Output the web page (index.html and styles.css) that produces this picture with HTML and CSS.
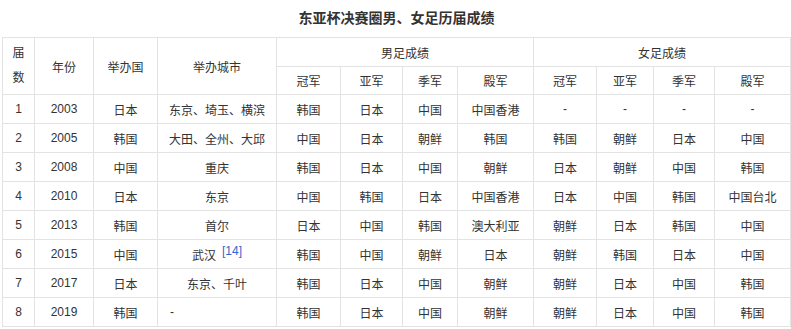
FILE: index.html
```html
<!DOCTYPE html>
<html lang="zh">
<head>
<meta charset="utf-8">
<link rel="stylesheet" href="styles.css">
</head>
<body>
<div class="wrap">
  <div class="title">东亚杯决赛圈男、女足历届成绩</div>
  <table class="results">
    <colgroup>
      <col class="c1"><col class="c2"><col class="c3"><col class="c4">
      <col class="c5"><col class="c6"><col class="c7"><col class="c8">
      <col class="c9"><col class="c10"><col class="c11"><col class="c12">
    </colgroup>
    <thead>
      <tr>
        <th rowspan="2" class="stack">届<br>数</th>
        <th rowspan="2">年份</th>
        <th rowspan="2">举办国</th>
        <th rowspan="2">举办城市</th>
        <th colspan="4">男足成绩</th>
        <th colspan="4">女足成绩</th>
      </tr>
      <tr>
        <th>冠军</th><th>亚军</th><th>季军</th><th>殿军</th>
        <th>冠军</th><th>亚军</th><th>季军</th><th>殿军</th>
      </tr>
    </thead>
    <tbody>
      <tr><td>1</td><td>2003</td><td>日本</td><td>东京、埼玉、横滨</td><td>韩国</td><td>日本</td><td>中国</td><td>中国香港</td><td>-</td><td>-</td><td>-</td><td>-</td></tr>
      <tr><td>2</td><td>2005</td><td>韩国</td><td>大田、全州、大邱</td><td>中国</td><td>日本</td><td>朝鲜</td><td>韩国</td><td>韩国</td><td>朝鲜</td><td>日本</td><td>中国</td></tr>
      <tr><td>3</td><td>2008</td><td>中国</td><td>重庆</td><td>韩国</td><td>日本</td><td>中国</td><td>朝鲜</td><td>日本</td><td>朝鲜</td><td>中国</td><td>韩国</td></tr>
      <tr><td>4</td><td>2010</td><td>日本</td><td>东京</td><td>中国</td><td>韩国</td><td>日本</td><td>中国香港</td><td>日本</td><td>中国</td><td>韩国</td><td>中国台北</td></tr>
      <tr><td>5</td><td>2013</td><td>韩国</td><td>首尔</td><td>日本</td><td>中国</td><td>韩国</td><td>澳大利亚</td><td>朝鲜</td><td>日本</td><td>韩国</td><td>中国</td></tr>
      <tr><td>6</td><td>2015</td><td>中国</td><td>武汉<sup class="ref">[14]</sup></td><td>韩国</td><td>中国</td><td>朝鲜</td><td>日本</td><td>朝鲜</td><td>韩国</td><td>日本</td><td>中国</td></tr>
      <tr><td>7</td><td>2017</td><td>日本</td><td>东京、千叶</td><td>韩国</td><td>日本</td><td>中国</td><td>朝鲜</td><td>朝鲜</td><td>日本</td><td>中国</td><td>韩国</td></tr>
      <tr><td>8</td><td>2019</td><td>韩国</td><td class="left">-</td><td>韩国</td><td>日本</td><td>中国</td><td>朝鲜</td><td>朝鲜</td><td>日本</td><td>中国</td><td>韩国</td></tr>
    </tbody>
  </table>
</div>
</body>
</html>
```

FILE: styles.css
```css
html, body {
  margin: 0;
  padding: 0;
  background: #fff;
}
body {
  font-family: "Liberation Sans", Arial, "Noto Sans CJK SC", sans-serif;
  color: #333;
  font-size: 12px;
}
.wrap {
  padding-left: 2px;
}
.title {
  width: 789px;
  height: 37px;
  line-height: 37px;
  text-align: center;
  font-size: 14px;
  font-weight: bold;
  color: #333;
}
.results {
  width: 789px;
  table-layout: fixed;
  border-collapse: collapse;
  border: 1px solid #e3e3e3;
}
.results th, .results td {
  border: 1px solid #e3e3e3;
  height: 28px;
  padding: 0 4px;
  text-align: center;
  vertical-align: middle;
  font-weight: normal;
  color: #333;
  white-space: nowrap;
}
.results thead tr:last-child th {
  height: 27px;
}
.results .stack {
  line-height: 25px;
}
.results td.left {
  text-align: left;
  padding-left: 12px;
}
.ref {
  color: #3366cc;
  font-size: 12px;
  margin-left: 6px;
  vertical-align: 5px;
  line-height: 0;
}
.c1 { width: 32px; }
.c2 { width: 59px; }
.c3 { width: 64px; }
.c4 { width: 119px; }
.c5 { width: 64px; }
.c6 { width: 62px; }
.c7 { width: 55px; }
.c8 { width: 76px; }
.c9 { width: 63px; }
.c10 { width: 57px; }
.c11 { width: 61px; }
.c12 { width: 76px; }
```
